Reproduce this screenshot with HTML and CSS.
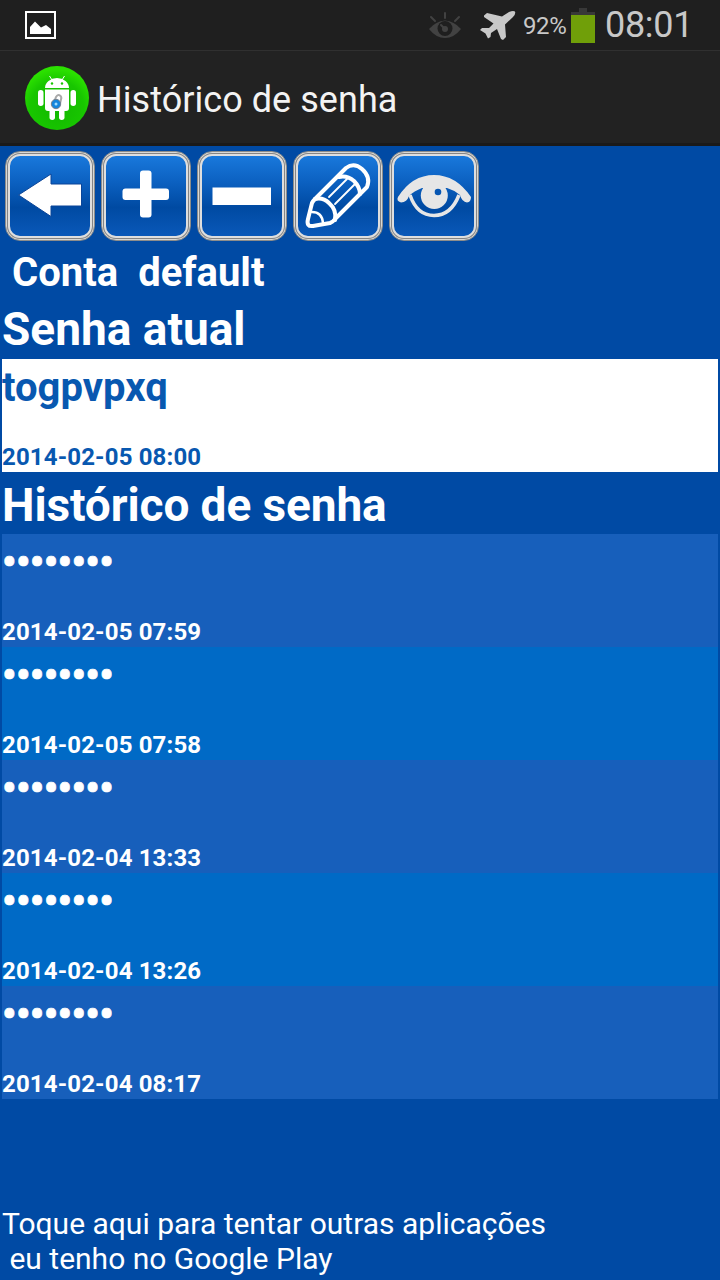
FILE: index.html
```
<!DOCTYPE html>
<html lang="pt">
<head>
    <meta charset="UTF-8" />
    <meta name="viewport" content="width=device-width, initial-scale=1" />
    <title>Histórico de senha</title>
    <link rel="stylesheet" href="styles.css">
</head>
<body>

    <div class="status-bar">
        <svg class="icon-picture" width="32" height="28" viewBox="0 0 32 28">
            <rect x="1" y="1" width="29" height="26" fill="none" stroke="#fff" stroke-width="2" />
            <path d="M5 23v-7l5-5.500 6 6 5-2.500 5 4v5z" fill="#fff" />
        </svg>
        <div class="status-right">
            <svg class="icon-eye" width="32" height="28" viewBox="0 0 32 28">
                <path d="M0 17Q7 9 16 8.500 25 9 32 17 25 26 16 26 7 26 0 17z" fill="#424242" />
                <circle cx="16" cy="16.500" r="7.500" fill="#1f1f1f" />
                <circle cx="16" cy="17" r="3" fill="#424242" />
                <path d="M16 17l-4-4M16 1v5M2 5l4 4M30 5l-4 4" stroke="#424242" stroke-width="2" stroke-linecap="round" />
            </svg>
            <svg class="icon-plane" width="36" height="30" viewBox="0 0 36 30">
                <path d="M29 1Q33-.5 35 .5 36 3 33 6L25 13.500 26 26 23 29 21 28 17 18 11 22 10.500 26 8 27.500 5.500 22.500 0 19 2 17 9 17 13.500 12.500 4 6 4 4.500 7 2 22 5.500z" fill="#c8c8c8" />
            </svg>
            <span class="battery-text">92%</span>
            <span class="battery"></span>
            <span class="clock">08:01</span>
        </div>
    </div>

    <header>
        <svg class="app-icon" width="64" height="64" viewBox="0 0 64 64">
            <defs>
                <radialGradient id="green" cx=".5" cy=".65" r=".6">
                    <stop offset="0" stop-color="#12b800" />
                    <stop offset=".7" stop-color="#18c600" />
                    <stop offset="1" stop-color="#2be000" />
                </radialGradient>
            </defs>
            <circle cx="32" cy="32" r="32" fill="url(#green)" />
            <g fill="#fff">
                <path d="M20 22a12 10 0 0 1 24 0z" />
                <path d="M20 23.500h24V42q0 3-3 3H23q-3 0-3-3z" />
                <rect x="13" y="24" width="5.500" height="16" rx="2.700" />
                <rect x="45.500" y="24" width="5.500" height="16" rx="2.700" />
                <rect x="24.500" y="40" width="5.500" height="14" rx="2.700" />
                <rect x="34" y="40" width="5.500" height="14" rx="2.700" />
            </g>
            <path d="M27 14l-2.500-4M37 14l2.500-4" stroke="#fff" stroke-width="1" />
            <circle cx="27" cy="17.500" r="1.200" fill="#18c600" />
            <circle cx="37" cy="17.500" r="1.200" fill="#18c600" />
            <path d="M29.500 35l1.500-4q2-3 4-1.500t1 4l-1 4" fill="none" stroke="#aaa" stroke-width="2" />
            <circle cx="31" cy="38" r="4.700" fill="#1585dc" stroke="#77808a" stroke-width="1" />
            <circle cx="31" cy="38" r="1.500" fill="#9edcff" />
        </svg>
        <h1>Histórico de senha</h1>
    </header>

    <nav class="toolbar">
        <button class="tool" aria-label="Voltar">
            <svg width="80" height="80" viewBox="0 0 80 80">
                <path d="M8.500 39L41 18v10h30.500v22H41v10.500z" fill="#fff" stroke="#0b4598" stroke-width="1" />
            </svg>
        </button>
        <button class="tool" aria-label="Adicionar">
            <svg width="80" height="80" viewBox="0 0 80 80">
                <rect x="34" y="14.500" width="11.500" height="47" rx="3" fill="#fff" />
                <rect x="16.500" y="32.500" width="46.500" height="11.500" rx="3" fill="#fff" />
            </svg>
        </button>
        <button class="tool" aria-label="Remover">
            <svg width="80" height="80" viewBox="0 0 80 80">
                <rect x="10.500" y="31.500" width="58.500" height="17.500" fill="#fff" />
            </svg>
        </button>
        <button class="tool" aria-label="Editar">
            <svg width="80" height="80" viewBox="0 0 80 80" fill="none" stroke="#fff" stroke-width="4" stroke-linejoin="round" stroke-linecap="round">
                <path d="M17 43L48 12Q56 6 64 13 73 21 69 31L37 63Q35 66 32 67L15 70Q8 71 10 63L14 47Q15 45 17 43z" />
                <path d="M17 43Q25 41 31 47 39 54 37 64" />
                <path d="M14 56Q24 56 25 67" stroke-width="2.500" />
                <path d="M41 21Q49 19 56 25 62 31 62 38" />
                <path d="M31 41L49 23M37 48L57 28" stroke-width="1.800" />
            </svg>
        </button>
        <button class="tool" aria-label="Mostrar">
            <svg width="80" height="80" viewBox="0 0 80 80" fill="#e6e6e6">
                <path d="M16 39Q23 59.500 40 59.500T65 39" fill="none" stroke="#e6e6e6" stroke-width="3.500" />
                <path d="M4 41Q18 19 40 19T77 41Q77 46 73 46.500 68 46 66 39 60 34 53 32H28Q20 35 15 40 13 46 7 46.500 2 45 4 41z" />
                <circle cx="40.300" cy="39.500" r="13.500" />
                <circle cx="44" cy="36" r="3.300" fill="#0756b2" />
            </svg>
        </button>
    </nav>

    <main>
        <h2 class="conta"><span>Conta</span><span>default</span></h2>

        <h2>Senha atual</h2>
        <div class="item atual">
            <p class="senha">togpvpxq</p>
            <p class="data">2014-02-05 08:00</p>
        </div>

        <h2 class="historico">Histórico de senha</h2>
        <div class="lista">
            <div class="item">
                <p class="senha oculta">••••••••</p>
                <p class="data">2014-02-05 07:59</p>
            </div>
            <div class="item">
                <p class="senha oculta">••••••••</p>
                <p class="data">2014-02-05 07:58</p>
            </div>
            <div class="item">
                <p class="senha oculta">••••••••</p>
                <p class="data">2014-02-04 13:33</p>
            </div>
            <div class="item">
                <p class="senha oculta">••••••••</p>
                <p class="data">2014-02-04 13:26</p>
            </div>
            <div class="item">
                <p class="senha oculta">••••••••</p>
                <p class="data">2014-02-04 08:17</p>
            </div>
        </div>
    </main>

    <footer>Toque aqui para tentar outras aplicações
 eu tenho no Google Play</footer>

</body>
</html>
```
FILE: styles.css
```
* {
    box-sizing: border-box;
    margin: 0;
    padding: 0;
}

body {
    font-family: Roboto, sans-serif;
    background-color: #004aa4;
    color: #fff;
    height: 1280px;
    display: flex;
    flex-direction: column;
    overflow: hidden;
}

svg {
    display: block;
}

.status-bar {
    display: flex;
    justify-content: space-between;
    height: 51px;
    padding: 0 29px 0 25px;
    background-color: #1f1f1f;
    border-bottom: 1px solid #303030;
}

.icon-picture {
    margin-top: 11px;
}

.status-right {
    display: flex;
    color: #c8c8c8;
}

.icon-eye {
    margin-top: 12px;
}

.icon-plane {
    margin: 11px 7px 0 19px;
}

.battery-text {
    width: 44px;
    margin-right: 4px;
    font-size: 24px;
    line-height: 52px;
    letter-spacing: -0.4px;
}

.battery {
    width: 24px;
    height: 35px;
    margin: 8px 10px 0 0;
    background: linear-gradient(#383838, #383838) 8px 0 / 8px 4px no-repeat,
        linear-gradient(#383838 3px, #709f09 3px) 0 4px / 24px 31px no-repeat;
}

.clock {
    width: 86px;
    font-size: 36px;
    line-height: 51px;
    letter-spacing: -0.3px;
}

header {
    display: flex;
    align-items: center;
    height: 95px;
    padding: 2px 25px 0;
    background-color: #222;
    border-bottom: 3px solid #1a1a1a;
}

    header h1 {
        margin: 4px 0 0 8px;
        font-size: 36px;
        font-weight: normal;
        letter-spacing: 0.05px;
        color: #f3f3f3;
    }

.toolbar {
    display: flex;
    gap: 6px;
    height: 100px;
    padding: 5px 5px 0;
}

.tool {
    display: flex;
    align-items: center;
    justify-content: center;
    width: 90px;
    height: 90px;
    border: 1px solid #8d8d8b;
    border-radius: 15px;
    background: linear-gradient(#1b7ce0, #0b60c0 35%, #004aa2 63%, #0b5abc);
    box-shadow: inset 0 0 0 1px #d8d8d6, inset 0 0 0 2px #858585, inset 0 0 0 4px #dedede;
}

h2 {
    height: 60px;
    padding-left: 2px;
    font-size: 46px;
    line-height: 61px;
}

.conta {
    display: flex;
    gap: 20px;
    height: 53px;
    padding-left: 12px;
    font-size: 40px;
    line-height: 54px;
}

.historico {
    height: 62px;
    line-height: 67px;
    letter-spacing: -0.1px;
}

.item {
    display: flex;
    flex-direction: column;
    justify-content: space-between;
    height: 113px;
    margin: 0 2px;
    padding: 5px 0 1px;
    font-weight: bold;
    background-color: #175fbb;
}

    .item:nth-child(even) {
        background-color: #006ac6;
    }

    .item.atual {
        background-color: #fff;
        color: #0858b0;
    }

.senha {
    font-size: 40px;
    line-height: 47px;
}

.oculta {
    letter-spacing: -0.5px;
    -webkit-text-stroke: 0.7px #fff;
}

.data {
    font-size: 24px;
    line-height: 28px;
    letter-spacing: 0.15px;
}

footer {
    margin-top: auto;
    padding: 0 2px 4px;
    font-size: 30px;
    line-height: 35px;
    white-space: pre;
}
```
